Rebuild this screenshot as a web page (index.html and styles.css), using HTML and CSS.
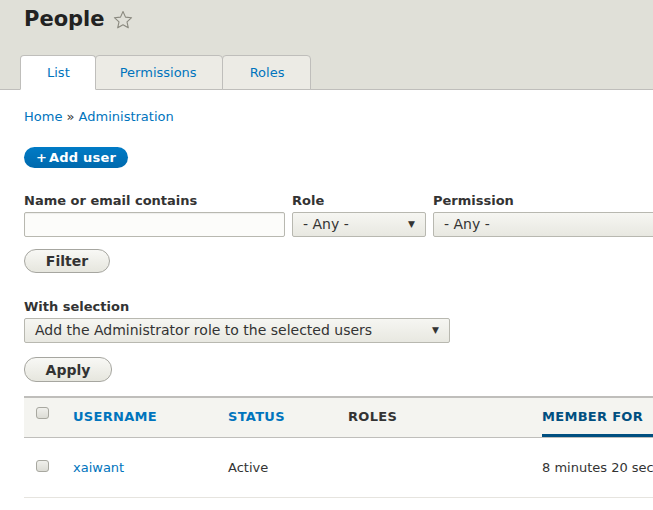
FILE: index.html
```html
<!DOCTYPE html>
<html lang="en">
<head>
    <meta charset="UTF-8">
    <meta name="viewport" content="width=device-width, initial-scale=1.0">
    <title>People</title>
    <link rel="stylesheet" href="styles.css">
</head>
<body>
    <header class="page-header">
        <h1>People
            <svg class="star" width="20" height="20" viewBox="0 0 20 20">
                <path d="M10 1.5l2.5 5.6 6.1.6-4.6 4.1 1.3 6-5.3-3.1-5.3 3.1 1.3-6-4.6-4.1 6.1-.6z" fill="none" stroke="#8a897f" stroke-width="1.1" stroke-linejoin="round"/>
            </svg>
        </h1>
        <ul class="tabs">
            <li class="tab active"><a href="#">List</a></li>
            <li class="tab"><a href="#">Permissions</a></li>
            <li class="tab"><a href="#">Roles</a></li>
        </ul>
    </header>

    <main class="content">
        <div class="breadcrumb"><a href="#">Home</a> » <a href="#">Administration</a></div>

        <a class="btn-primary" href="#">+<span>Add user</span></a>

        <div class="filters">
            <div class="field field-name">
                <label>Name or email contains</label>
                <input type="text" class="text-input">
            </div>
            <div class="field field-role">
                <label>Role</label>
                <div class="select arrow">- Any -</div>
            </div>
            <div class="field field-perm">
                <label>Permission</label>
                <div class="select">- Any -</div>
            </div>
        </div>
        <button class="btn">Filter</button>

        <div class="field field-bulk">
            <label>With selection</label>
            <div class="select arrow">Add the Administrator role to the selected users</div>
        </div>
        <button class="btn btn-apply">Apply</button>

        <table class="users">
            <colgroup>
                <col style="width: 37px">
                <col style="width: 155px">
                <col style="width: 120px">
                <col style="width: 194px">
                <col style="width: 200px">
            </colgroup>
            <thead>
                <tr>
                    <th><input type="checkbox"></th>
                    <th><a href="#">Username</a></th>
                    <th><a href="#">Status</a></th>
                    <th class="plain">Roles</th>
                    <th class="sorted"><a href="#">Member for</a></th>
                </tr>
            </thead>
            <tbody>
                <tr>
                    <td><input type="checkbox"></td>
                    <td><a href="#">xaiwant</a></td>
                    <td>Active</td>
                    <td></td>
                    <td>8 minutes 20 seconds</td>
                </tr>
            </tbody>
        </table>
    </main>
</body>
</html>
```

FILE: styles.css
```css
body {
    margin: 0;
    font-family: "DejaVu Sans", sans-serif;
    font-size: 13px;
    color: #333;
    background: #fff;
    overflow: hidden;
}
a {
    color: #0074bd;
    text-decoration: none;
}
.page-header {
    background-color: #e0e0d8;
    padding: 0 20px;
    border-bottom: 1px solid #bfbebb;
}
.page-header h1 {
    margin: 0;
    padding: 5px 0 0 4px;
    height: 28px;
    font-size: 21px;
    line-height: 28px;
    font-weight: bold;
    color: #222;
    display: flex;
    align-items: center;
}
.star {
    margin-left: 8px;
    margin-top: 1px;
}
.tabs {
    list-style: none;
    margin: 22px 0 -1px 0;
    padding: 0;
    display: flex;
    position: relative;
}
.tab {
    background-color: #ecebe5;
    border: 1px solid #bfbebb;
    border-radius: 4px 4px 0 0;
    height: 33px;
    line-height: 33px;
    margin-left: -1px;
}
.tab:first-child {
    margin-left: 0;
}
.tab a {
    display: block;
    padding: 0 26px 0 27px;
}
.tab:nth-child(2) a {
    padding: 0 25px 0 24px;
}
.tab.active {
    background-color: #fff;
    border-bottom-color: #fff;
    position: relative;
    z-index: 1;
}
.tab.active a {
    padding: 0 25px 0 26px;
}
.content {
    padding: 18px 24px 0 24px;
}
.breadcrumb {
    line-height: 18px;
}
.btn-primary {
    display: inline-block;
    margin-top: 21px;
    height: 21px;
    line-height: 21px;
    padding: 0 12px;
    border-radius: 11px;
    background: linear-gradient(#007bc6, #0069ad);
    color: #fff;
    font-weight: bold;
    font-size: 13px;
    letter-spacing: 0.2px;
}
.btn-primary span {
    margin-left: 2px;
}
.filters {
    display: flex;
    gap: 7px;
    margin-top: 24px;
}
.field label {
    display: block;
    font-weight: bold;
    line-height: 18px;
    margin-bottom: 2px;
}
.field-name {
    flex: 0 0 261px;
}
.field-role {
    flex: 0 0 134px;
}
.field-perm {
    flex: 0 0 260px;
}
.text-input {
    box-sizing: border-box;
    width: 100%;
    height: 25px;
    margin: 0;
    border: 1px solid #b8b8b0;
    border-radius: 2px;
    background: #fcfcfa;
    box-shadow: inset 0 1px 1px rgba(0, 0, 0, 0.06);
}
.select {
    position: relative;
    box-sizing: border-box;
    height: 25px;
    line-height: 23px;
    padding: 0 10px;
    border: 1px solid #b8b8b0;
    border-radius: 2px;
    background: linear-gradient(#f6f6f2, #e8e8e1);
    font-size: 14px;
    color: #333;
    white-space: nowrap;
}
.select.arrow::after {
    content: "▼";
    position: absolute;
    right: 10px;
    top: 0;
    font-size: 9px;
    color: #333;
}
.btn {
    display: block;
    margin-top: 12px;
    height: 24px;
    width: 86px;
    padding: 0;
    border: 1px solid #a6a6a0;
    border-radius: 12px;
    background: linear-gradient(#f8f8f5, #e6e6de);
    font-family: "DejaVu Sans", sans-serif;
    font-weight: bold;
    font-size: 14px;
    color: #333;
}
.field-bulk {
    margin-top: 25px;
    width: 426px;
}
.btn-apply {
    margin-top: 14px;
    width: 88px;
    height: 25px;
}
.users {
    margin-top: 14px;
    border-collapse: collapse;
    table-layout: fixed;
    width: 706px;
}
.users th {
    background-color: #f4f4f0;
    border-top: 2px solid #bfbebb;
    border-bottom: 1px solid #bfbebb;
    height: 37px;
    padding: 0 12px 2px 12px;
    text-align: left;
    text-transform: uppercase;
    font-weight: bold;
    font-size: 13px;
    letter-spacing: 0.3px;
    white-space: nowrap;
}
.users th.plain {
    color: #333;
}
.users th.sorted {
    background: linear-gradient(#004f80, #004f80) no-repeat 12px 100% / calc(100% - 12px) 3px, #f4f4f0;
}
.users th.sorted a {
    color: #004f80;
}
.users td {
    height: 59px;
    padding: 0 12px;
    border-bottom: 1px solid #e6e4df;
    white-space: nowrap;
    overflow: hidden;
}
.users input[type="checkbox"] {
    appearance: none;
    -webkit-appearance: none;
    width: 13px;
    height: 12px;
    margin: 0;
    border: 1px solid #a8a8a0;
    border-radius: 3px;
    background: linear-gradient(#f0f0ec, #dcdcd5);
    vertical-align: middle;
    position: relative;
    top: -5px;
}
.users td input[type="checkbox"] {
    top: -3px;
}
```
